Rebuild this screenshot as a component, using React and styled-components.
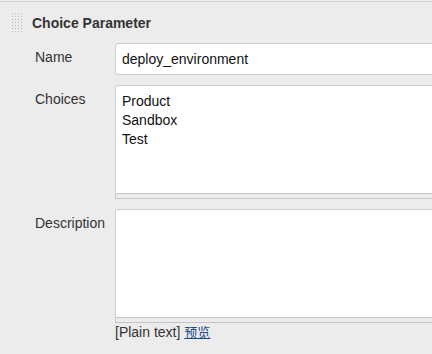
import styled, { createGlobalStyle } from "styled-components";

const GlobalStyle = createGlobalStyle`
  html, body {
    margin: 0;
    padding: 0;
    background: #ececec;
    overflow: hidden;
  }
  body {
    font-family: "Liberation Sans", Arial, "Noto Sans CJK SC", sans-serif;
    font-size: 14px;
    color: #333;
  }
`

const Block = styled.section`
  margin-top: 1px;
  border-top: 1px solid #d3d3d3;
  width: 432px;
`

const Header = styled.div`
  display: flex;
  align-items: center;
  gap: 9px;
  height: 41px;
  padding-left: 11px;
`

const Grip = styled.svg`
  display: block;
  width: 12px;
  height: 22px;
`

const Title = styled.h3`
  margin: 0;
  font-size: 14px;
  font-weight: bold;
  color: #333;
`

const Row = styled.div`
  display: grid;
  grid-template-columns: 80px 330px;
  padding-left: 35px;
  margin-bottom: ${(p) => p.$gap || 0}px;
`

const Label = styled.label`
  padding-top: 6px;
  line-height: 16px;
  color: #333;
`

const TextInput = styled.input`
  box-sizing: border-box;
  width: 330px;
  height: 32px;
  margin: 0;
  padding: 0 6px;
  border: 1px solid #cdcdcd;
  border-radius: 3px 0 0 3px;
  background: #fff;
  font-family: inherit;
  font-size: 14px;
  color: #111;
  outline: none;
`

const Field = styled.div`
  display: flex;
  flex-direction: column;
`

const Area = styled.textarea`
  box-sizing: border-box;
  display: block;
  width: 330px;
  height: 109px;
  margin: 0;
  padding: 6px 6px 5px;
  border: 1px solid #cdcdcd;
  border-bottom-color: #c4c4c4;
  border-radius: 3px 0 0 0;
  background: #fff;
  font-family: inherit;
  font-size: 14px;
  line-height: 19px;
  color: #111;
  resize: none;
  outline: none;
`

const Handle = styled.div`
  box-sizing: border-box;
  width: 330px;
  height: 5px;
  background: #ececec;
  border-left: 1px solid #c8c8c8;
  border-bottom: 1px solid #c4c4c4;
`

const Hint = styled.div`
  margin-top: 1px;
  line-height: 16px;
  color: #333;

  a {
    color: #204a87;
    text-decoration: underline;
    font-family: "Noto Sans CJK SC", sans-serif;
    font-size: 13px;
  }
`

const GripIcon = () => (
  <Grip viewBox="0 0 12 22">
    {Array.from({ length: 7 }).map((_, r) =>
      Array.from({ length: 4 }).map((_, c) => (
        <rect key={`${r}-${c}`} x={c * 3 + 1} y={r * 3 + 1} width="1" height="1" fill="#bdbdbd" />
      ))
    )}
  </Grip>
)

export default function App() {
  return (
    <>
      <GlobalStyle />
      <Block>
        <Header>
          <GripIcon />
          <Title>Choice Parameter</Title>
        </Header>
        <Row $gap={10}>
          <Label>Name</Label>
          <TextInput defaultValue="deploy_environment" />
        </Row>
        <Row $gap={10}>
          <Label>Choices</Label>
          <Field>
            <Area defaultValue={"Product\nSandbox\nTest"} />
            <Handle />
          </Field>
        </Row>
        <Row>
          <Label>Description</Label>
          <Field>
            <Area defaultValue="" />
            <Handle />
            <Hint>
              [Plain text] <a href="#">预览</a>
            </Hint>
          </Field>
        </Row>
      </Block>
    </>
  );
}
